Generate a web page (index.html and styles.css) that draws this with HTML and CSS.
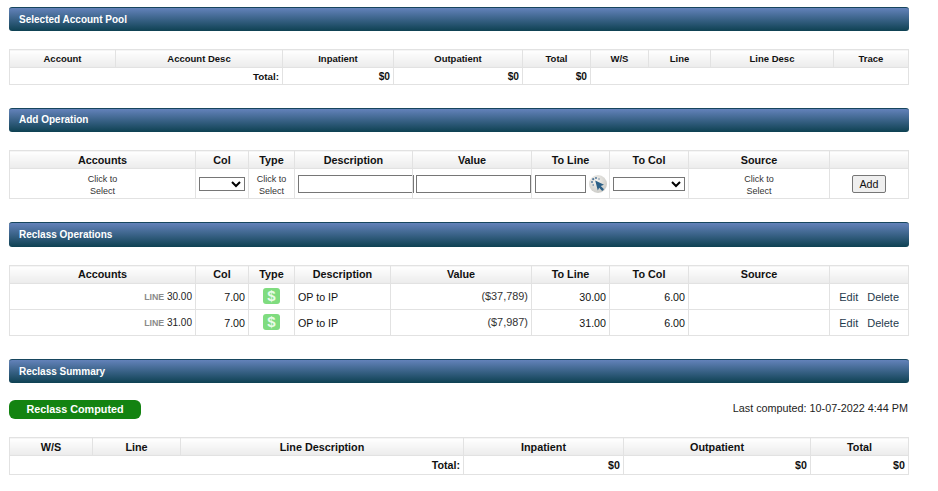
FILE: index.html
```html
<!DOCTYPE html>
<html lang="en">
<head>
<meta charset="utf-8">
<title>Reclass</title>
<link rel="stylesheet" href="styles.css">
</head>
<body>
<main class="page">
  <section class="section">
    <h2 class="bar">Selected Account Pool</h2>
    <table class="grid grid-small">
      <colgroup><col class="p1"><col class="p2"><col class="p3"><col class="p4"><col class="p5"><col class="p6"><col class="p7"><col class="p8"><col class="p9"></colgroup>
      <thead><tr><th>Account</th><th>Account Desc</th><th>Inpatient</th><th>Outpatient</th><th>Total</th><th>W/S</th><th>Line</th><th>Line Desc</th><th>Trace</th></tr></thead>
      <tbody><tr class="total"><td colspan="2" class="r">Total:</td><td class="r amt">$0</td><td class="r amt">$0</td><td class="r amt">$0</td><td colspan="4"></td></tr></tbody>
    </table>
  </section>

  <section class="section">
    <h2 class="bar bar-up">Add Operation</h2>
    <table class="grid">
      <colgroup><col class="o1"><col class="o2"><col class="o3"><col class="o4"><col class="o5"><col class="o6"><col class="o7"><col class="o8"><col class="o9"></colgroup>
      <thead><tr><th>Accounts</th><th>Col</th><th>Type</th><th>Description</th><th>Value</th><th>To Line</th><th>To Col</th><th>Source</th><th></th></tr></thead>
      <tbody>
        <tr class="form-row">
          <td class="pick">Click to<br>Select</td>
          <td class="ctl"><select class="sel sel-col"><option></option></select></td>
          <td class="pick">Click to<br>Select</td>
          <td class="ctl"><input class="inp inp-desc" type="text"></td>
          <td class="ctl"><input class="inp inp-value" type="text"></td>
          <td class="ctl line-cell"><input class="inp inp-line" type="text"><svg class="wand" viewBox="0 0 18 18" aria-hidden="true"><defs><radialGradient id="wg" cx="40%" cy="35%" r="70%"><stop offset="0" stop-color="#f6f4f0"/><stop offset="1" stop-color="#c9c9c5"/></radialGradient></defs><circle cx="9" cy="9" r="9" fill="url(#wg)"/><path d="M6.2 5.4 L15 9.8 L11.8 11 L15 14.2 L13.2 16 L10.2 12.8 L8.8 15.6 Z" fill="#2b5f86"/><g fill="#55789a"><circle cx="4.2" cy="4.2" r="1.1"/><circle cx="7" cy="3" r="1"/><circle cx="3" cy="7" r="1"/><circle cx="4.2" cy="10" r=".8"/><circle cx="10" cy="4" r=".7"/></g></svg></td>
          <td class="ctl"><select class="sel sel-tocol"><option></option></select></td>
          <td class="pick">Click to<br>Select</td>
          <td class="add-cell"><button class="add" type="button">Add</button></td>
        </tr>
      </tbody>
    </table>
  </section>

  <section class="section">
    <h2 class="bar bar-tall">Reclass Operations</h2>
    <table class="grid grid-ops">
      <colgroup><col class="o1"><col class="o2"><col class="o3"><col class="r4"><col class="r5"><col class="o6"><col class="o7"><col class="o8"><col class="o9"></colgroup>
      <thead><tr><th>Accounts</th><th>Col</th><th>Type</th><th>Description</th><th>Value</th><th>To Line</th><th>To Col</th><th>Source</th><th></th></tr></thead>
      <tbody>
        <tr class="op-row">
          <td class="r acct"><span class="line-tag">LINE</span> 30.00</td><td class="r">7.00</td><td class="c"><span class="dollar">$</span></td><td>OP to IP</td><td class="r val">($37,789)</td><td class="r">30.00</td><td class="r">6.00</td><td></td><td class="actions"><span>Edit</span><span>Delete</span></td>
        </tr>
        <tr class="op-row">
          <td class="r acct"><span class="line-tag">LINE</span> 31.00</td><td class="r">7.00</td><td class="c"><span class="dollar">$</span></td><td>OP to IP</td><td class="r val">($7,987)</td><td class="r">31.00</td><td class="r">6.00</td><td></td><td class="actions"><span>Edit</span><span>Delete</span></td>
        </tr>
      </tbody>
    </table>
  </section>

  <section class="section">
    <h2 class="bar bar-tight">Reclass Summary</h2>
    <div class="status">
      <span class="pill">Reclass Computed</span>
      <span class="computed">Last computed: 10-07-2022 4:44 PM</span>
    </div>
    <table class="grid grid-summary">
      <colgroup><col class="s1"><col class="s2"><col class="s3"><col class="s4"><col class="s5"><col class="s6"></colgroup>
      <thead><tr><th>W/S</th><th>Line</th><th>Line Description</th><th>Inpatient</th><th>Outpatient</th><th>Total</th></tr></thead>
      <tbody><tr class="total"><td colspan="3" class="r">Total:</td><td class="r">$0</td><td class="r">$0</td><td class="r">$0</td></tr></tbody>
    </table>
  </section>
</main>
</body>
</html>
```

FILE: styles.css
```css
* { box-sizing: border-box; }
html, body { margin: 0; background: #fff; }
body { font-family: "Liberation Sans", Arial, sans-serif; color: #111; font-size: 11px; }
.page { width: 900px; margin-left: 9px; padding-top: 7px; }
.section { margin-bottom: 23px; }
.bar {
  height: 24px; margin: 0 0 18px; padding: 0 10px;
  font-size: 10px; font-weight: bold; line-height: 23px; color: #fff;
  background: linear-gradient(#6382ba, #0e4152);
  border-top: 1px solid #17465e; border-radius: 3px;
}
.bar-up { line-height: 21px; }
.bar-tall { height: 25px; }
.bar-tight { margin-bottom: 17px; }

.grid { width: 899px; table-layout: fixed; border-collapse: collapse; }
.grid th, .grid td { border: 1px solid #e2e2e2; padding: 0 3px; overflow: visible; }
.grid th {
  height: 18px; padding: 0; font-size: 10.8px; font-weight: bold; color: #111; text-align: center;
  background: linear-gradient(#fff, #ebebeb);
}
.grid td { font-size: 10.7px; }
.grid-small th { font-size: 9.5px; }
.grid-ops th { padding-bottom: 2px; }
.total td { height: 18px; font-weight: bold; }
.grid-summary .total td { height: 19px; }
.grid-small .total td { height: 17px; font-size: 9.8px; }
.grid-small .total .amt { font-size: 10.2px; }
.r { text-align: right; }
.c { text-align: center; }

.p1 { width: 106px; } .p2 { width: 167px; } .p3 { width: 111px; } .p4 { width: 129px; } .p5 { width: 68px; }
.p6 { width: 58px; } .p7 { width: 62px; } .p8 { width: 123px; } .p9 { width: 75px; }
.o1 { width: 186px; } .o2 { width: 53px; } .o3 { width: 46px; } .o4 { width: 118px; } .o5 { width: 119px; }
.o6 { width: 78px; } .o7 { width: 79px; } .o8 { width: 141px; } .o9 { width: 79px; }
.r4 { width: 96px; } .r5 { width: 141px; }
.s1 { width: 83px; } .s2 { width: 88px; } .s3 { width: 283px; } .s4 { width: 160px; } .s5 { width: 187px; } .s6 { width: 98px; }

.form-row td { height: 30px; }
.grid .pick { font-size: 9px; line-height: 12px; text-align: center; color: #333; padding-top: 2px; }
.grid .ctl { padding: 0 0 0 3px; white-space: nowrap; }
.inp {
  display: block; height: 18px; padding: 0; margin: 0;
  border: 1px solid #767676; background: #fff; border-radius: 0;
}
.inp-desc { width: 116px; }
.inp-value { width: 115px; }
.inp-line { display: inline-block; width: 51px; vertical-align: middle; }
.wand { width: 18px; height: 18px; margin-left: 3px; vertical-align: middle; }
.sel {
  display: block; height: 14px; padding: 0; font-size: 9px;
  border: 1px solid #767676; background-color: #fff; border-radius: 0;
}
.sel-col { width: 46px; }
.sel-tocol { width: 72px; margin-left: 0; }
.add-cell { text-align: center; }
.add {
  display: block; width: 34px; height: 18px; margin: 0 auto; padding: 0;
  font: 10.7px "Liberation Sans", Arial, sans-serif; color: #111;
  border: 1px solid #767676; border-radius: 2px; background: #efefef;
}

.op-row td { height: 26px; }
.grid .acct { font-size: 10px; color: #222; }
.line-tag { font-size: 8.8px; font-weight: bold; color: #8a8a8a; }
.grid .val { color: #333; font-size: 10.9px; vertical-align: top; padding-top: 6px; }
.dollar {
  display: block; width: 17px; height: 16px; margin: 0 auto 1px; border-radius: 3px;
  background: #7fdc7f; color: #e9fbe9; font-size: 15px; font-weight: bold; line-height: 16px; text-align: center;
}
.grid .actions { font-size: 11px; text-align: right; color: #1f3a4d; padding-right: 9px; }
.actions span + span { margin-left: 9px; }

.status { display: flex; justify-content: space-between; align-items: flex-start; height: 19px; margin-bottom: 18px; }
.pill {
  width: 132px; height: 19px; border-radius: 6px; background: #138311; color: #fff;
  font-size: 10.8px; font-weight: bold; line-height: 18px; text-align: center;
}
.computed { font-size: 10.8px; line-height: 16px; color: #222; padding-right: 1px; }
```
